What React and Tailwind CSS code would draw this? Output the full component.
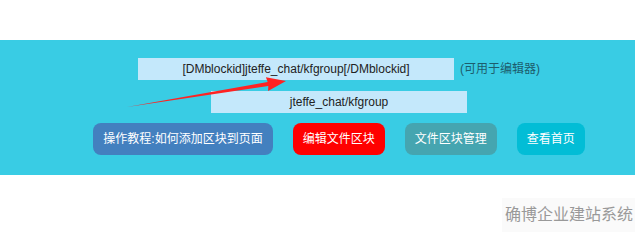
const buttons = [
  { label: "操作教程:如何添加区块到页面", className: "bg-[#4380bf]" },
  { label: "编辑文件区块", className: "bg-[#ff0000]" },
  { label: "文件区块管理", className: "bg-[#45a5b0]" },
  { label: "查看首页", className: "bg-[#02bdd6]" },
];

export default function App() {
  return (
    <div className="relative w-[635px] h-[232px] overflow-hidden bg-white font-['Liberation_Sans','Noto_Sans_CJK_SC',sans-serif]">
      <div className="mt-[40px] bg-[#39cce4] pt-[18px] pb-[20px] pl-[43px]">
        {/* Block code */}
        <div className="flex items-center justify-center gap-[6px]">
          <div className="w-[316px] h-[22px] bg-[#c4e8fb] flex items-center justify-center text-[12px] text-[#222]">
            [DMblockid]jteffe_chat/kfgroup[/DMblockid]
          </div>
          <span className="w-[80px] text-[12px] text-[#1d5d6d] whitespace-nowrap">(可用于编辑器)</span>
        </div>
        <div className="flex justify-center mt-[11px]">
          <div className="w-[256px] h-[22px] bg-[#c4e8fb] flex items-center justify-center text-[12px] text-[#222]">
            jteffe_chat/kfgroup
          </div>
        </div>

        {/* Actions */}
        <div className="flex justify-center gap-[20px] mt-[10px]">
          {buttons.map((b) => (
            <button
              key={b.label}
              className={`h-[32px] px-[10px] rounded-[8px] text-white text-[12px] whitespace-nowrap ${b.className}`}
            >
              {b.label}
            </button>
          ))}
        </div>
      </div>

      <div className="flex justify-end mt-[23px]">
        <div className="h-[34px] pl-[3px] pr-[2px] bg-[#fafafa] flex items-center text-[16px] text-[#999]">
          确博企业建站系统
        </div>
      </div>

      {/* Red pointer arrow */}
      <svg className="absolute inset-0 pointer-events-none" width="635" height="232">
        <polygon
          points="127,107 267.7,81.9 265.9,77.3 286,81 268.1,91.1 268.3,85.9"
          fill="#ff2222"
        />
      </svg>
    </div>
  );
}
